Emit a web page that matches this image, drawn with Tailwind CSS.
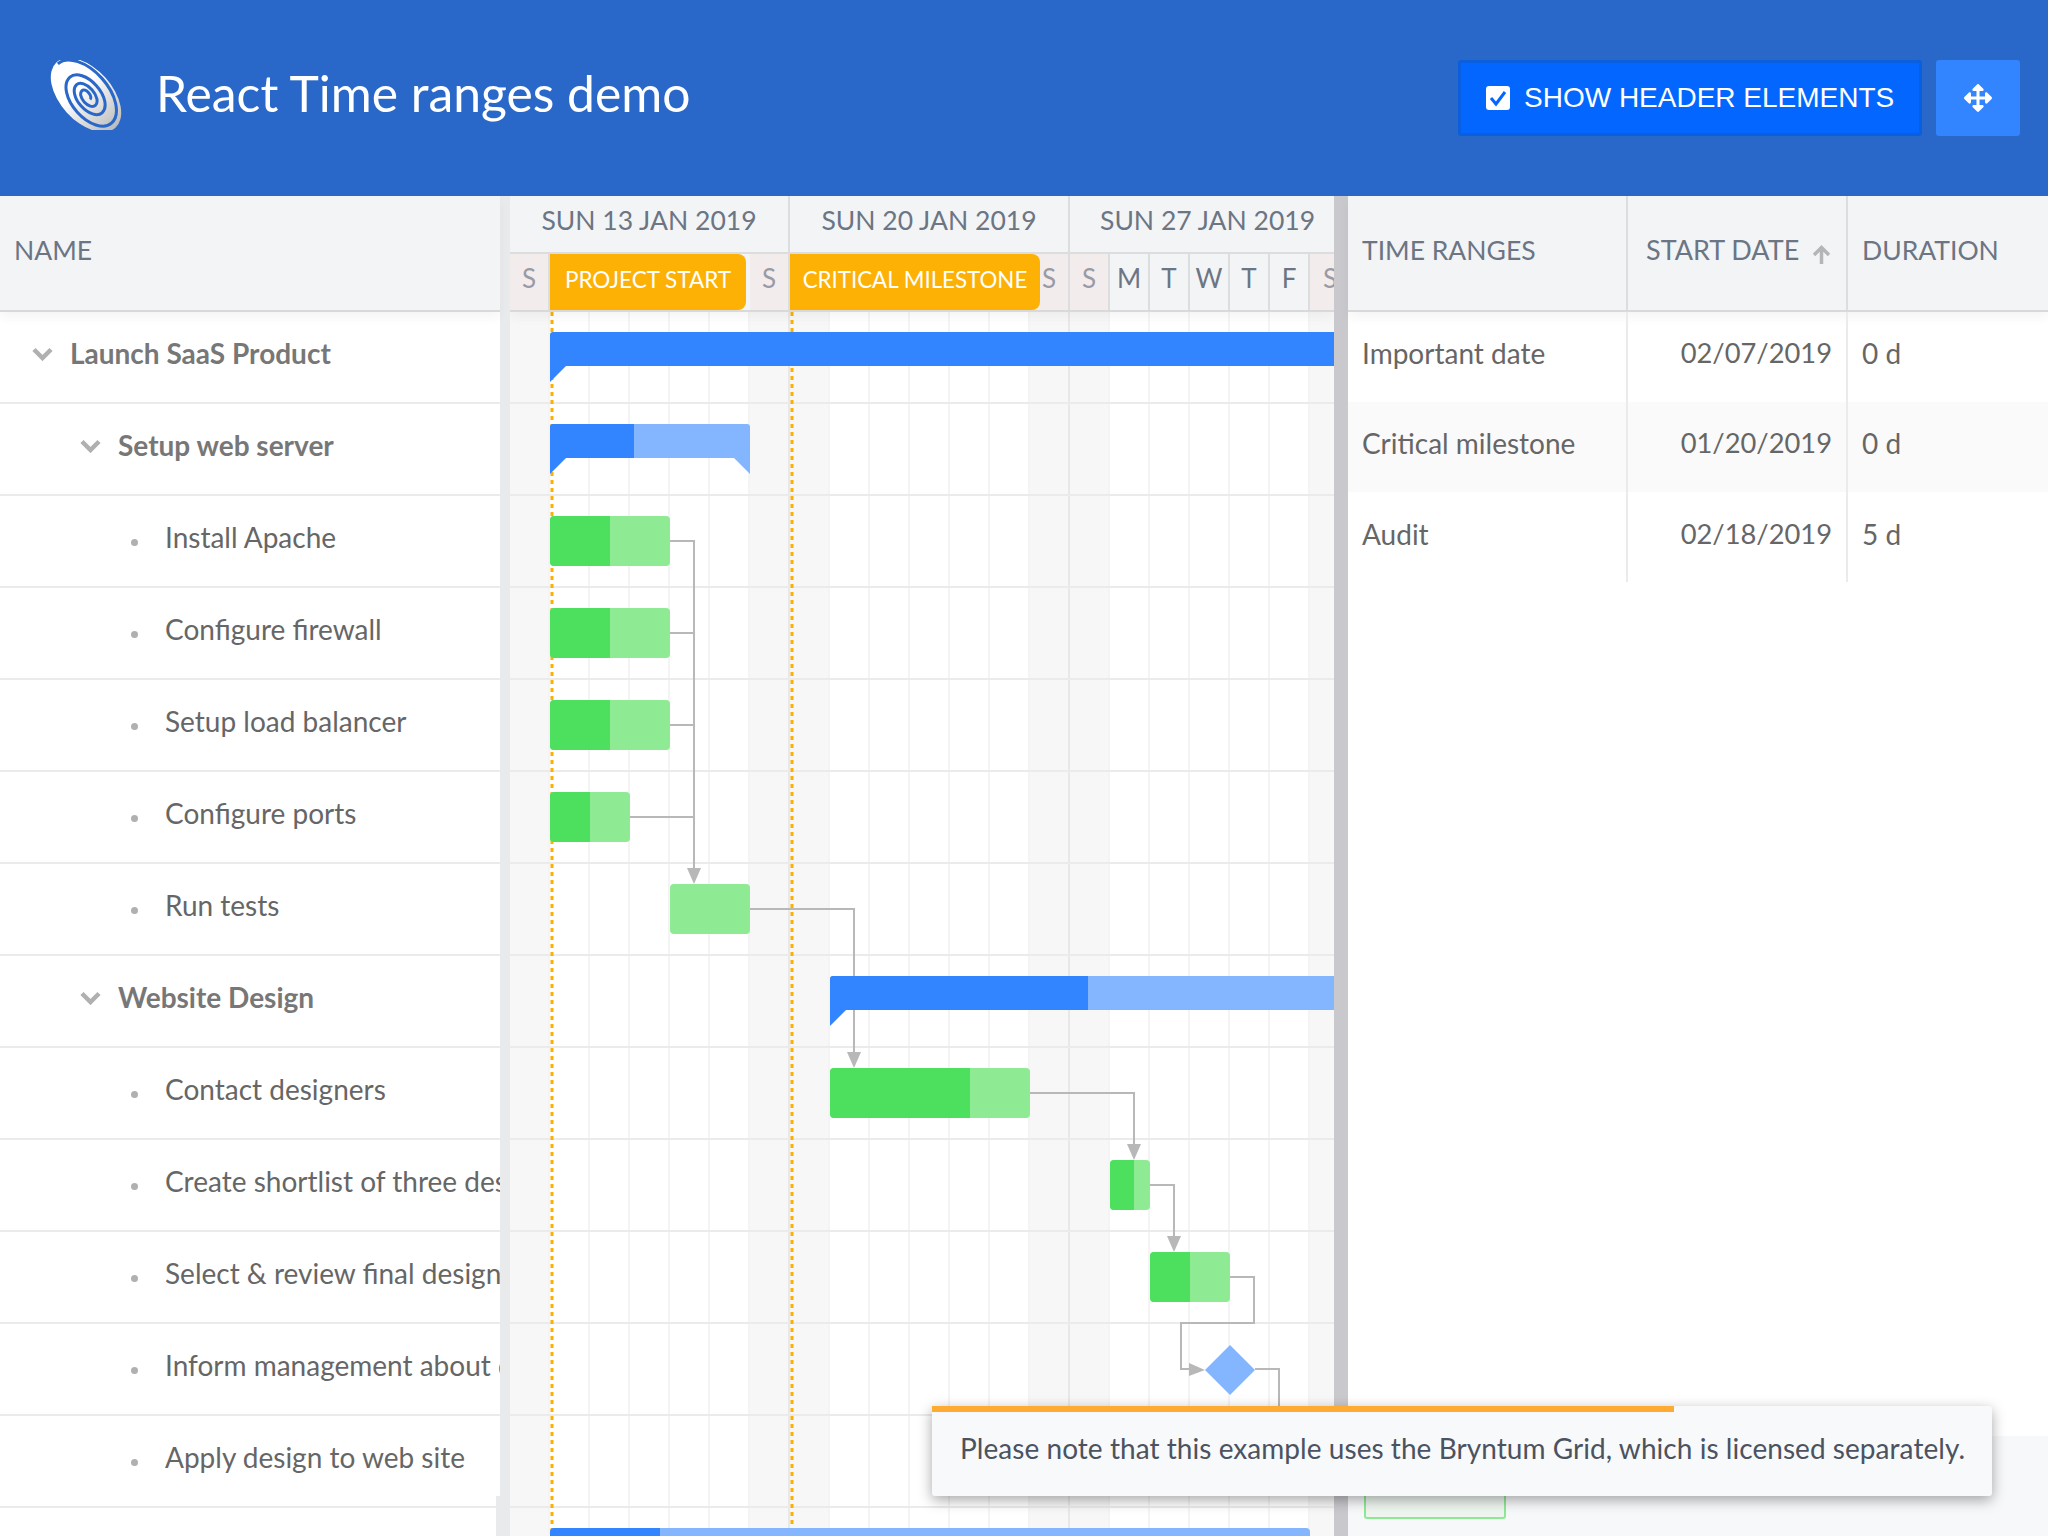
<!DOCTYPE html>
<html lang="en">
<head>
  <meta charset="UTF-8" />
  <title>React Time ranges demo</title>
  <script src="https://cdn.jsdelivr.net/npm/@tailwindcss/browser@4"></script>
</head>
<body class="bg-white font-['Lato',sans-serif] text-[#666] text-[28px]">
<div class="relative w-[2048px] h-[1536px] overflow-hidden flex flex-col">

  <!-- app header -->
  <header class="h-[196px] shrink-0 bg-[#2968c8] flex items-start">
    <svg class="ml-[50px] mt-[60px] w-[72px] h-[70px]" viewBox="0 0 72 70">
      <defs>
        <linearGradient id="logoFill" x1="0" y1="0" x2="1" y2="0">
          <stop offset="0.4" stop-color="#ffffff" />
          <stop offset="1" stop-color="#bcbcbc" />
        </linearGradient>
      </defs>
      <g transform="rotate(48 36 35)">
        <ellipse cx="36" cy="35" rx="44" ry="26" fill="url(#logoFill)" />
        <path d="M-6 35A40 23 0 0 1 74 35A31 18 0 0 1 12 35A24 14 0 0 1 60 35A19 11 0 0 1 22 35A14 8 0 0 1 50 35A10 6 0 0 1 30 35A6 3.500 0 0 1 42 35" fill="none" stroke="#2968c8" stroke-width="3" />
        <path d="M-10 40A46 25 0 0 0 60 60" fill="none" stroke="#2968c8" stroke-width="2.500" />
      </g>
    </svg>
    <h1 class="ml-[34px] mt-[58px] text-[49.800px] leading-[70px] font-normal text-white">React Time ranges demo</h1>
    <div class="ml-auto mr-[28px] mt-[60px] flex gap-[14px]">
      <button class="w-[464px] h-[76px] flex items-center pl-[25px] gap-[14px] rounded-[3px] bg-[#0367ff] border-[3px] border-[#0a5fdf] text-white font-['Liberation_Sans',sans-serif] text-[28px]">
        <svg class="w-[24px] h-[24px]" viewBox="0 0 24 24"><rect width="24" height="24" rx="3" fill="#fff" /><path d="M5 12l5 6 9-12" fill="none" stroke="#0367ff" stroke-width="3" /></svg>
        <span>SHOW HEADER ELEMENTS</span>
      </button>
      <button class="w-[84px] h-[76px] flex items-center justify-center rounded-[3px] bg-[#3284ff]">
        <svg class="w-[28px] h-[28px]" viewBox="0 0 512 512" fill="#fff"><path d="M352.201 425.775l-79.196 79.196c-9.373 9.373-24.568 9.373-33.941 0l-79.196-79.196c-15.119-15.119-4.411-40.971 16.971-40.97h51.162L228 284H127.196v51.162c0 21.382-25.851 32.09-40.971 16.971L7.029 272.937c-9.373-9.373-9.373-24.569 0-33.941L86.225 159.8c15.119-15.119 40.971-4.411 40.971 16.971V228H228V127.196h-51.23c-21.382 0-32.09-25.851-16.971-40.971l79.196-79.196c9.373-9.373 24.568-9.373 33.941 0l79.196 79.196c15.119 15.119 4.411 40.971-16.971 40.971h-51.162V228h100.804v-51.162c0-21.382 25.851-32.09 40.97-16.971l79.196 79.196c9.373 9.373 9.373 24.569 0 33.941L425.773 352.2c-15.119 15.119-40.971 4.411-40.97-16.971V284H284v100.804h51.23c21.382 0 32.09 25.851 16.971 40.971z" /></svg>
      </button>
    </div>
  </header>

  <main class="flex-1 flex min-h-0">

    <!-- tree column -->
    <section class="relative w-[500px] shrink-0 flex flex-col">
      <div class="h-[116px] shrink-0 flex items-center pb-[5px] pl-[14px] bg-[#f3f4f6] border-b-2 border-[#d9d9d9] text-[#6b7583] text-[26.500px] shadow-[0_6px_10px_rgba(0,0,0,0.04)]">NAME</div>
      <div class="h-[92px] flex items-center pb-[8px] border-b-2 border-[#ebebeb] font-bold text-[#777]">
        <svg class="ml-[32px] mt-[2px] w-[21px] h-[14px]" viewBox="0 0 21 14"><path d="M2 2.5l8.500 8.500 8.500-8.500" fill="none" stroke="#b0b0b2" stroke-width="4.500" /></svg>
        <span class="ml-[17px]">Launch SaaS Product</span>
      </div>
      <div class="h-[92px] flex items-center pb-[8px] border-b-2 border-[#ebebeb] font-bold text-[#777]">
        <svg class="ml-[80px] mt-[2px] w-[21px] h-[14px]" viewBox="0 0 21 14"><path d="M2 2.5l8.500 8.500 8.500-8.500" fill="none" stroke="#b0b0b2" stroke-width="4.500" /></svg>
        <span class="ml-[17px]">Setup web server</span>
      </div>
      <div class="h-[92px] flex items-center pb-[8px] border-b-2 border-[#ebebeb] whitespace-nowrap overflow-hidden"><i class="ml-[131px] mt-[10px] w-[7px] h-[7px] shrink-0 rounded-full bg-[#b0b0b0]"></i><span class="ml-[27px]">Install Apache</span></div>
      <div class="h-[92px] flex items-center pb-[8px] border-b-2 border-[#ebebeb] whitespace-nowrap overflow-hidden"><i class="ml-[131px] mt-[10px] w-[7px] h-[7px] shrink-0 rounded-full bg-[#b0b0b0]"></i><span class="ml-[27px]">Configure firewall</span></div>
      <div class="h-[92px] flex items-center pb-[8px] border-b-2 border-[#ebebeb] whitespace-nowrap overflow-hidden"><i class="ml-[131px] mt-[10px] w-[7px] h-[7px] shrink-0 rounded-full bg-[#b0b0b0]"></i><span class="ml-[27px]">Setup load balancer</span></div>
      <div class="h-[92px] flex items-center pb-[8px] border-b-2 border-[#ebebeb] whitespace-nowrap overflow-hidden"><i class="ml-[131px] mt-[10px] w-[7px] h-[7px] shrink-0 rounded-full bg-[#b0b0b0]"></i><span class="ml-[27px]">Configure ports</span></div>
      <div class="h-[92px] flex items-center pb-[8px] border-b-2 border-[#ebebeb] whitespace-nowrap overflow-hidden"><i class="ml-[131px] mt-[10px] w-[7px] h-[7px] shrink-0 rounded-full bg-[#b0b0b0]"></i><span class="ml-[27px]">Run tests</span></div>
      <div class="h-[92px] flex items-center pb-[8px] border-b-2 border-[#ebebeb] font-bold text-[#777]">
        <svg class="ml-[80px] mt-[2px] w-[21px] h-[14px]" viewBox="0 0 21 14"><path d="M2 2.5l8.500 8.500 8.500-8.500" fill="none" stroke="#b0b0b2" stroke-width="4.500" /></svg>
        <span class="ml-[17px]">Website Design</span>
      </div>
      <div class="h-[92px] flex items-center pb-[8px] border-b-2 border-[#ebebeb] whitespace-nowrap overflow-hidden"><i class="ml-[131px] mt-[10px] w-[7px] h-[7px] shrink-0 rounded-full bg-[#b0b0b0]"></i><span class="ml-[27px]">Contact designers</span></div>
      <div class="h-[92px] flex items-center pb-[8px] border-b-2 border-[#ebebeb] whitespace-nowrap overflow-hidden"><i class="ml-[131px] mt-[10px] w-[7px] h-[7px] shrink-0 rounded-full bg-[#b0b0b0]"></i><span class="ml-[27px]">Create shortlist of three designs</span></div>
      <div class="h-[92px] flex items-center pb-[8px] border-b-2 border-[#ebebeb] whitespace-nowrap overflow-hidden"><i class="ml-[131px] mt-[10px] w-[7px] h-[7px] shrink-0 rounded-full bg-[#b0b0b0]"></i><span class="ml-[27px]">Select &amp; review final design</span></div>
      <div class="h-[92px] flex items-center pb-[8px] border-b-2 border-[#ebebeb] whitespace-nowrap overflow-hidden"><i class="ml-[131px] mt-[10px] w-[7px] h-[7px] shrink-0 rounded-full bg-[#b0b0b0]"></i><span class="ml-[27px]">Inform management about decision</span></div>
      <div class="h-[92px] flex items-center pb-[8px] border-b-2 border-[#ebebeb] whitespace-nowrap overflow-hidden"><i class="ml-[131px] mt-[10px] w-[7px] h-[7px] shrink-0 rounded-full bg-[#b0b0b0]"></i><span class="ml-[27px]">Apply design to web site</span></div>
      <div class="absolute right-0 top-[1300px] w-[4px] h-[40px] bg-[#e9eaec]"></div>
    </section>

    <div class="w-[10px] shrink-0 bg-[#e9eaec]"></div>

    <!-- timeline -->
    <section class="relative w-[824px] shrink-0 overflow-hidden">
      <div class="relative z-10 h-[116px] bg-[#f3f4f6] border-b-2 border-[#d9d9d9] shadow-[0_6px_10px_rgba(0,0,0,0.04)]">
        <div class="h-[58px] flex border-b-2 border-[#dcdddf] text-[#6b7583] text-[26.500px] leading-[48px] whitespace-nowrap">
          <div class="w-[280px] shrink-0 text-center border-r-2 border-[#dcdddf]">SUN 13 JAN 2019</div>
          <div class="w-[280px] shrink-0 text-center border-r-2 border-[#dcdddf]">SUN 20 JAN 2019</div>
          <div class="w-[264px] shrink-0 pl-[30px]">SUN 27 JAN 2019</div>
        </div>
        <div class="relative h-[56px] flex text-[#6b7583] text-[26px] leading-[48px] text-center">
          <div class="w-[40px] shrink-0 bg-[#f3ecec] text-[#9a9aa5] border-r-2 border-[#dcdddf]">S</div>
          <!-- the weekdays under the two range headers stay empty, they would be covered -->
          <div class="w-[200px] shrink-0"></div>
          <div class="w-[40px] shrink-0 bg-[#f3ecec] text-[#9a9aa5] border-r-2 border-[#dcdddf]">S</div>
          <div class="w-[240px] shrink-0"></div>
          <div class="w-[40px] shrink-0 bg-[#f3ecec] text-[#9a9aa5] border-r-2 border-[#dcdddf]">S</div>
          <div class="w-[40px] shrink-0 bg-[#f3ecec] text-[#9a9aa5] border-r-2 border-[#dcdddf]">S</div>
          <div class="w-[40px] shrink-0 border-r-2 border-[#dcdddf]">M</div>
          <div class="w-[40px] shrink-0 border-r-2 border-[#dcdddf]">T</div>
          <div class="w-[40px] shrink-0 border-r-2 border-[#dcdddf]">W</div>
          <div class="w-[40px] shrink-0 border-r-2 border-[#dcdddf]">T</div>
          <div class="w-[40px] shrink-0 border-r-2 border-[#dcdddf]">F</div>
          <div class="w-[24px] shrink-0 overflow-hidden bg-[#f3ecec] text-[#9a9aa5]"><span class="block w-[40px]">S</span></div>
          <!-- time range headers -->
          <div class="absolute left-[40px] top-0 w-[196px] h-[56px] flex items-center justify-center pb-[4px] rounded-r-[8px] bg-[#fdb105] text-white text-[22.500px]">PROJECT START</div>
          <div class="absolute left-[280px] top-0 w-[250px] h-[56px] flex items-center justify-center pb-[4px] rounded-r-[8px] bg-[#fdb105] text-white text-[22.300px]">CRITICAL MILESTONE</div>
        </div>
      </div>

      <div class="relative">
        <!-- day columns -->
        <div class="absolute inset-0 flex">
          <div class="w-[40px] shrink-0 bg-[#f7f7f7] border-r-2 border-[#f4f4f4]"></div>
          <div class="w-[40px] shrink-0 border-r-2 border-[#f4f4f4]"></div>
          <div class="w-[40px] shrink-0 border-r-2 border-[#f4f4f4]"></div>
          <div class="w-[40px] shrink-0 border-r-2 border-[#f4f4f4]"></div>
          <div class="w-[40px] shrink-0 border-r-2 border-[#f4f4f4]"></div>
          <div class="w-[40px] shrink-0 border-r-2 border-[#f4f4f4]"></div>
          <div class="w-[40px] shrink-0 bg-[#f7f7f7] border-r-2 border-[#e8e8e8]"></div>
          <div class="w-[40px] shrink-0 bg-[#f7f7f7] border-r-2 border-[#f4f4f4]"></div>
          <div class="w-[40px] shrink-0 border-r-2 border-[#f4f4f4]"></div>
          <div class="w-[40px] shrink-0 border-r-2 border-[#f4f4f4]"></div>
          <div class="w-[40px] shrink-0 border-r-2 border-[#f4f4f4]"></div>
          <div class="w-[40px] shrink-0 border-r-2 border-[#f4f4f4]"></div>
          <div class="w-[40px] shrink-0 border-r-2 border-[#f4f4f4]"></div>
          <div class="w-[40px] shrink-0 bg-[#f7f7f7] border-r-2 border-[#e8e8e8]"></div>
          <div class="w-[40px] shrink-0 bg-[#f7f7f7] border-r-2 border-[#f4f4f4]"></div>
          <div class="w-[40px] shrink-0 border-r-2 border-[#f4f4f4]"></div>
          <div class="w-[40px] shrink-0 border-r-2 border-[#f4f4f4]"></div>
          <div class="w-[40px] shrink-0 border-r-2 border-[#f4f4f4]"></div>
          <div class="w-[40px] shrink-0 border-r-2 border-[#f4f4f4]"></div>
          <div class="w-[40px] shrink-0 border-r-2 border-[#f4f4f4]"></div>
          <div class="w-[40px] shrink-0 bg-[#f7f7f7]"></div>
        </div>

        <!-- row lines -->
        <div class="relative">
          <div class="h-[92px] border-b-2 border-[#ebebeb]"></div>
          <div class="h-[92px] border-b-2 border-[#ebebeb]"></div>
          <div class="h-[92px] border-b-2 border-[#ebebeb]"></div>
          <div class="h-[92px] border-b-2 border-[#ebebeb]"></div>
          <div class="h-[92px] border-b-2 border-[#ebebeb]"></div>
          <div class="h-[92px] border-b-2 border-[#ebebeb]"></div>
          <div class="h-[92px] border-b-2 border-[#ebebeb]"></div>
          <div class="h-[92px] border-b-2 border-[#ebebeb]"></div>
          <div class="h-[92px] border-b-2 border-[#ebebeb]"></div>
          <div class="h-[92px] border-b-2 border-[#ebebeb]"></div>
          <div class="h-[92px] border-b-2 border-[#ebebeb]"></div>
          <div class="h-[92px] border-b-2 border-[#ebebeb]"></div>
          <div class="h-[92px] border-b-2 border-[#ebebeb]"></div>
          <div class="h-[92px]"></div>
        </div>

        <!-- dependency lines and range markers, drawn in page coordinates -->
        <svg class="absolute left-0 top-0 w-[824px] h-[1288px]" viewBox="510 312 824 1288" fill="none">
          <path d="M552 312V1536M792 312V1536" stroke="#fbb004" stroke-width="3" stroke-dasharray="4 4" />
          <g stroke="#b8b8b8" stroke-width="2">
            <path d="M670 541H694V870M670 633H694M670 725H694M630 817H694" />
            <path d="M750 909H854V1054" />
            <path d="M1030 1093H1134V1146" />
            <path d="M1150 1185H1174V1238" />
            <path d="M1230 1277H1254V1323H1181V1369H1192" />
            <path d="M1255 1369H1279V1420" />
          </g>
          <g fill="#b8b8b8">
            <path d="M687 868H701L694 884Z" />
            <path d="M847 1052H861L854 1068Z" />
            <path d="M1127 1144H1141L1134 1160Z" />
            <path d="M1167 1236H1181L1174 1252Z" />
            <path d="M1189 1363V1376L1205 1370Z" />
          </g>
        </svg>

        <!-- bars -->
        <div class="absolute left-[40px] top-[20px] w-[800px] h-[34px]">
          <div class="h-full rounded-t-[3px] bg-[#3284ff]"></div>
          <div class="absolute left-0 top-[34px] w-[16px] h-[16px] bg-[#3284ff] [clip-path:polygon(0_0,100%_0,0_100%)]"></div>
        </div>
        <div class="absolute left-[40px] top-[112px] w-[200px] h-[34px]">
          <div class="h-full flex rounded-t-[3px] overflow-hidden bg-[#84b5ff]"><div class="w-[84px] bg-[#3284ff]"></div></div>
          <div class="absolute left-0 top-[34px] w-[16px] h-[16px] bg-[#3284ff] [clip-path:polygon(0_0,100%_0,0_100%)]"></div>
          <div class="absolute right-0 top-[34px] w-[16px] h-[16px] bg-[#84b5ff] [clip-path:polygon(0_0,100%_0,100%_100%)]"></div>
        </div>
        <div class="absolute left-[40px] top-[204px] w-[120px] h-[50px] flex rounded-[4px] overflow-hidden bg-[#8eeb94]"><div class="w-[60px] bg-[#4ddf5e]"></div></div>
        <div class="absolute left-[40px] top-[296px] w-[120px] h-[50px] flex rounded-[4px] overflow-hidden bg-[#8eeb94]"><div class="w-[60px] bg-[#4ddf5e]"></div></div>
        <div class="absolute left-[40px] top-[388px] w-[120px] h-[50px] flex rounded-[4px] overflow-hidden bg-[#8eeb94]"><div class="w-[60px] bg-[#4ddf5e]"></div></div>
        <div class="absolute left-[40px] top-[480px] w-[80px] h-[50px] flex rounded-[4px] overflow-hidden bg-[#8eeb94]"><div class="w-[40px] bg-[#4ddf5e]"></div></div>
        <div class="absolute left-[160px] top-[572px] w-[80px] h-[50px] rounded-[4px] bg-[#8eeb94]"></div>
        <div class="absolute left-[320px] top-[664px] w-[520px] h-[34px]">
          <div class="h-full flex rounded-t-[3px] overflow-hidden bg-[#84b5ff]"><div class="w-[258px] bg-[#3284ff]"></div></div>
          <div class="absolute left-0 top-[34px] w-[16px] h-[16px] bg-[#3284ff] [clip-path:polygon(0_0,100%_0,0_100%)]"></div>
        </div>
        <div class="absolute left-[320px] top-[756px] w-[200px] h-[50px] flex rounded-[4px] overflow-hidden bg-[#8eeb94]"><div class="w-[140px] bg-[#4ddf5e]"></div></div>
        <div class="absolute left-[600px] top-[848px] w-[40px] h-[50px] flex rounded-[4px] overflow-hidden bg-[#8eeb94]"><div class="w-[24px] bg-[#4ddf5e]"></div></div>
        <div class="absolute left-[640px] top-[940px] w-[80px] h-[50px] flex rounded-[4px] overflow-hidden bg-[#8eeb94]"><div class="w-[40px] bg-[#4ddf5e]"></div></div>
        <div class="absolute left-[695px] top-[1033px] w-[50px] h-[50px] bg-[#84b5ff] [clip-path:polygon(50%_0,100%_50%,50%_100%,0_50%)]"></div>
        <div class="absolute left-[40px] top-[1216px] w-[760px] h-[34px] flex rounded-t-[4px] overflow-hidden bg-[#84b5ff]"><div class="w-[110px] bg-[#3284ff]"></div></div>
      </div>
    </section>

    <div class="w-[14px] shrink-0 bg-[#c8c8cd]"></div>

    <!-- time ranges grid -->
    <section class="flex-1 min-w-0 flex flex-col">
      <div class="h-[116px] shrink-0 flex bg-[#f3f4f6] border-b-2 border-[#d9d9d9] text-[#6b7583] text-[26.500px] shadow-[0_6px_10px_rgba(0,0,0,0.04)]">
        <div class="w-[280px] shrink-0 flex items-center pb-[5px] pl-[14px] border-r-2 border-[#dcdddf]">TIME RANGES</div>
        <div class="w-[220px] shrink-0 flex items-center pb-[5px] pl-[18px] border-r-2 border-[#dcdddf]">
          <span class="text-[27px]">START DATE</span>
          <svg class="ml-[13px] mt-[8px] w-[19px] h-[19px]" viewBox="0 0 19 19"><path d="M9.500 19V3M2 10l7.500-7.500L17 10" fill="none" stroke="#b5b5b5" stroke-width="3.500" /></svg>
        </div>
        <div class="flex-1 flex items-center pb-[5px] pl-[14px]">DURATION</div>
      </div>
      <div class="h-[90px] flex items-center">
        <div class="w-[280px] h-full shrink-0 flex items-center pb-[8px] pl-[14px] border-r-2 border-[#ebebeb]">Important date</div>
        <div class="w-[220px] h-full shrink-0 flex items-center justify-end pb-[8px] pr-[14px] border-r-2 border-[#ebebeb] text-[27.300px]">02/07/2019</div>
        <div class="pl-[14px] pb-[8px]">0 d</div>
      </div>
      <div class="h-[90px] flex items-center bg-[#fafafa]">
        <div class="w-[280px] h-full shrink-0 flex items-center pb-[8px] pl-[14px] border-r-2 border-[#ebebeb]">Critical milestone</div>
        <div class="w-[220px] h-full shrink-0 flex items-center justify-end pb-[8px] pr-[14px] border-r-2 border-[#ebebeb] text-[27.300px]">01/20/2019</div>
        <div class="pl-[14px] pb-[8px]">0 d</div>
      </div>
      <div class="h-[90px] flex items-center">
        <div class="w-[280px] h-full shrink-0 flex items-center pb-[6px] pl-[14px] border-r-2 border-[#ebebeb]">Audit</div>
        <div class="w-[220px] h-full shrink-0 flex items-center justify-end pb-[6px] pr-[14px] border-r-2 border-[#ebebeb] text-[27.300px]">02/18/2019</div>
        <div class="pl-[14px] pb-[6px]">5 d</div>
      </div>
      <div class="flex-1"></div>
      <div class="h-[100px] shrink-0 bg-[#f7f8fa] pl-[16px] pt-[33px]">
        <div class="w-[142px] h-[50px] rounded-[3px] border-2 border-[#8ee993] bg-[#eef5ef]"></div>
      </div>
    </section>
  </main>

  <!-- licence notice -->
  <div class="absolute z-20 left-[932px] top-[1406px] w-[1060px] h-[90px] rounded-[3px] bg-[#f8f9fb] shadow-[0_4px_14px_rgba(0,0,0,0.35)] text-[#4b5360] text-[28px]">
    <div class="absolute left-0 top-0 w-[742px] h-[6px] bg-[#fdab33]"></div>
    <div class="pl-[28px] leading-[84px] whitespace-nowrap tracking-[0.05px]">Please note that this example uses the Bryntum Grid, which is licensed separately.</div>
  </div>
</div>
</body>
</html>
